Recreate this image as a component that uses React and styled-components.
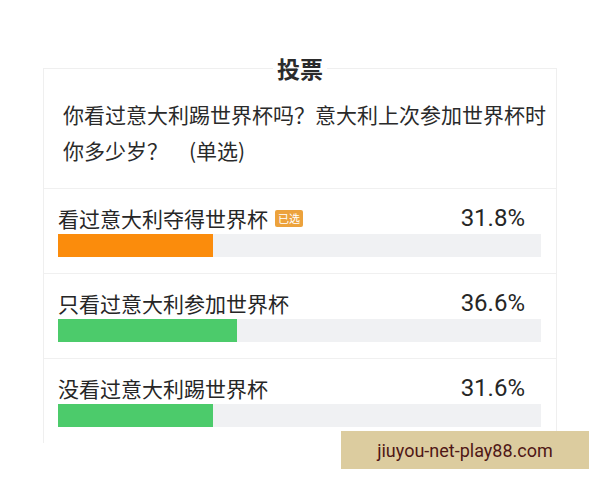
import React from 'react';
import styled, { createGlobalStyle } from 'styled-components';

const GlobalStyle = createGlobalStyle`
    html, body {
        margin: 0;
        padding: 0;
        background: #ffffff;
    }
    body {
        font-family: "Roboto", "Noto Sans CJK SC", sans-serif;
        color: #262626;
    }
`;

const Page = styled.div`
    position: relative;
    width: 600px;
    height: 480px;
    padding: 55px 43px 0;
    box-sizing: border-box;
    overflow: hidden;
`;

const Card = styled.fieldset`
    margin: 0;
    padding: 0;
    min-width: 0;
    border: 1px solid #efefef;
    border-bottom: none;
    background: #ffffff;
`;

const Title = styled.legend`
    margin: 0 auto;
    padding: 0 4px;
    font-family: "Noto Sans CJK SC", sans-serif;
    font-size: 23px;
    font-weight: 700;
    line-height: 26px;
    color: #2b2b2b;
`;

const Question = styled.p`
    margin: 0;
    padding: 15px 8px 20px 19px;
    font-family: "Noto Sans CJK SC", sans-serif;
    font-size: 21px;
    line-height: 36px;
    color: #2a2a2a;
    border-bottom: 1px solid #f0f0f0;
`;

const Option = styled.div`
    padding: 17px 15px 16px 14px;
    border-bottom: ${p => (p.last ? 'none' : '1px solid #f0f0f0')};
`;

const OptionHead = styled.div`
    display: flex;
    align-items: center;
    height: 24px;
    padding-right: 16px;
`;

const Label = styled.span`
    font-family: "Noto Sans CJK SC", sans-serif;
    font-size: 21px;
    line-height: 24px;
    color: #262626;
`;

const Badge = styled.span`
    display: inline-flex;
    align-items: center;
    justify-content: center;
    margin-left: 7px;
    width: 28px;
    height: 17px;
    border-radius: 2px;
    background: #eca23c;
    color: #ffffff;
    font-family: "Noto Sans CJK SC", sans-serif;
    font-size: 11px;
    line-height: 1;
`;

const Percent = styled.span`
    margin-left: auto;
    font-family: "Roboto", sans-serif;
    font-size: 24px;
    line-height: 24px;
    color: #262626;
`;

const Track = styled.div`
    margin-top: 4px;
    height: 23px;
    background: #f0f1f3;
`;

const Fill = styled.div`
    height: 100%;
    background: ${p => (p.picked ? '#fb8c0c' : '#4ccb6b')};
`;

const Watermark = styled.div`
    position: absolute;
    left: 341px;
    top: 431px;
    width: 248px;
    height: 38px;
    display: flex;
    align-items: center;
    justify-content: center;
    background: #dccc9f;
    color: #4f1716;
    font-family: "Roboto", sans-serif;
    font-size: 18px;
`;

const options = [
    { label: '看过意大利夺得世界杯', value: 31.8, width: 32.1, picked: true },
    { label: '只看过意大利参加世界杯', value: 36.6, width: 37.1 },
    { label: '没看过意大利踢世界杯', value: 31.6, width: 32.1 },
];

export default function App() {
    return (
        <>
            <GlobalStyle />
            <Page>
                <Card>
                    <Title>投票</Title>
                    <Question>
                        你看过意大利踢世界杯吗？意大利上次参加世界杯时你多少岁？　(单选)
                    </Question>
                    {options.map((o, i) => (
                        <Option key={o.label} last={i === options.length - 1}>
                            <OptionHead>
                                <Label>{o.label}</Label>
                                {o.picked && <Badge>已选</Badge>}
                                <Percent>{`${o.value}%`}</Percent>
                            </OptionHead>
                            <Track>
                                <Fill picked={o.picked} style={{ width: `${o.width}%` }} />
                            </Track>
                        </Option>
                    ))}
                </Card>
                <Watermark>jiuyou-net-play88.com</Watermark>
            </Page>
        </>
    );
}
